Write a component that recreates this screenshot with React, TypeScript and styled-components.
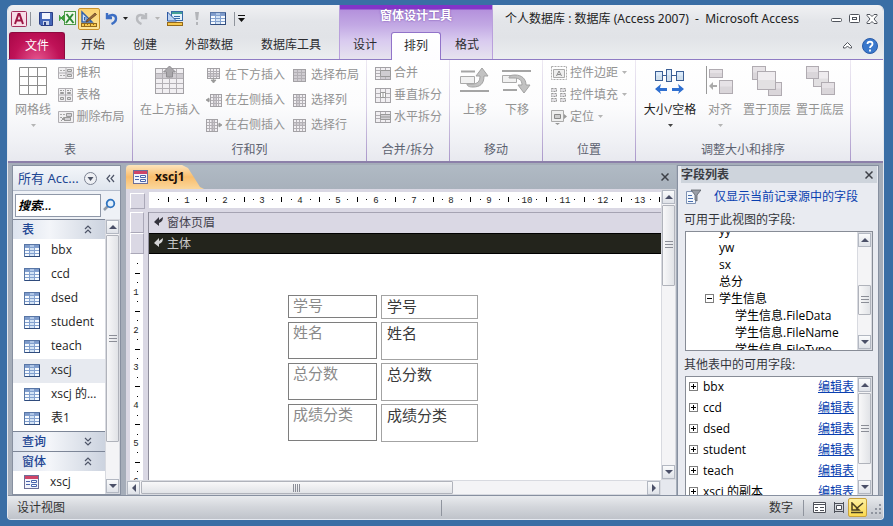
import React from 'react';
import styled, { createGlobalStyle, css } from 'styled-components';

const Global = createGlobalStyle`
  *, *::before, *::after { box-sizing: border-box; }
  html, body { margin: 0; background: #3a6ea5; }
  body, button, input, textarea {
    font-family: "Open Sans", "Noto Sans CJK SC", sans-serif;
    font-size: 12px;
    line-height: 16px;
  }
  button { border: 0; padding: 0; margin: 0; background: none; color: inherit; white-space: nowrap; }
  svg { display: block; flex: none; }
`;

/* ---------- window frame ---------- */

const Desktop = styled.div`
  height: 100vh;
  min-height: 420px;
  padding: 5px 9px 6px 7px;
  background: #3a6ea5;
  overflow: hidden;
`;
const Window = styled.div`
  height: 100%;
  display: flex;
  flex-direction: column;
  background: #a5adb9;
  border: 1px solid #e4e8ef;
  border-top: 0;
  border-radius: 6px 6px 4px 4px;
  overflow: hidden;
`;
const Header = styled.header`
  display: grid;
  grid-template-columns: auto auto 1fr;
  background: linear-gradient(#f0f1f3, #e3e5e9 30%, #e1e3e7 60%, #eceef0);
  border-bottom: 1px solid #8f7bc4;
  height: 55px;
`;
const HeaderPart = styled.div`
  display: grid;
  grid-template-rows: 27px 27px;
  min-width: 0;
`;
const QuickBar = styled.div`
  display: flex;
  align-items: center;
  padding-left: 2px;
`;
const QuickButton = styled.button<{ $w?: number; $on?: boolean }>`
  width: ${p => p.$w ?? 22}px;
  height: 22px;
  display: flex;
  align-items: center;
  justify-content: center;
  ${p => p.$on && css`
    border: 1px solid #c9922c;
    border-radius: 2px;
    background: linear-gradient(#fbd26f, #fde59a);
  `}
`;
const QuickRule = styled.span`
  width: 1px;
  height: 14px;
  background: #8f949c;
  margin: 0 3px;
`;
const TabRow = styled.nav`
  display: flex;
  align-items: stretch;
  color: #2c2c30;
`;
const Tab = styled.button<{ $active?: boolean }>`
  padding: 0 14px 1px;
  ${p => p.$active && css`
    background: linear-gradient(#fff, #fdfcff);
    border: 1px solid #9173c9;
    border-bottom: 0;
    border-radius: 3px 3px 0 0;
    margin-bottom: -1px;
  `}
`;
const ContextTabs = styled(TabRow)`
  gap: 1px;
  & ${Tab} { width: 50px; padding: 0 0 1px; }
`;
const FileTab = styled.button`
  width: 56px;
  margin: 0 2px 0 1px;
  color: #fff;
  border: 1px solid #8d0a3f;
  border-bottom: 0;
  border-radius: 3px 3px 0 0;
  background: radial-gradient(ellipse at 50% 110%, #e6578f, #bf1257 60%, #a90747);
`;
const Context = styled(HeaderPart)`
  margin-left: 4px;
  border: solid #b9a0dc;
  border-width: 0 1px;
  background: linear-gradient(#8334c8 0, #8334c8 4px, #b491dc 5px, #c2a8e4 20px, #d9cbef 36px, #e6e3ee 54px);
`;
const ContextTitle = styled.div`
  color: #fff;
  text-align: center;
  font-weight: 700;
  line-height: 21px;
  text-shadow: 0 0 2px #6b3fa5;
`;
const TitleLine = styled.div`
  display: flex;
  align-items: center;
  padding: 0 2px 0 12px;
  min-width: 0;
`;
const Title = styled.h1`
  flex: 1;
  margin: 0;
  font-family: "Noto Sans", "Noto Sans CJK SC", sans-serif;
  font-size: 12px;
  font-weight: 400;
  color: #222;
  white-space: pre;
  overflow: hidden;
`;
const WinButton = styled.button`
  width: 18px;
  display: flex;
  justify-content: center;
`;
const HelpLine = styled.div`
  display: flex;
  justify-content: flex-end;
  align-items: center;
  gap: 6px;
  padding-right: 5px;
`;

/* ---------- ribbon ---------- */

const Ribbon = styled.div`
  display: flex;
  height: 103px;
  flex: none;
  background: linear-gradient(#fff, #fcfcfd 45%, #f0f1f5 80%, #e8e9ef);
  border-bottom: 2px solid #8c80a9;
`;
const Group = styled.section<{ $w: number }>`
  flex: 0 0 ${p => p.$w}px;
  display: flex;
  flex-direction: column;
  border-right: 1px solid;
  border-image: linear-gradient(#eeeaf3, #d5cce4 50%, #a996ca) 1;
`;
const GroupBody = styled.div`
  flex: 1;
  display: flex;
  justify-content: center;
  padding-top: 2px;
`;
const GroupName = styled.h2`
  margin: 0;
  height: 20px;
  font-size: 12px;
  font-weight: 400;
  line-height: 18px;
  text-align: center;
  color: #5c6270;
`;
const BigButton = styled.button<{ $w: number; $live?: boolean }>`
  width: ${p => p.$w}px;
  height: 68px;
  display: flex;
  flex-direction: column;
  align-items: center;
  color: ${p => (p.$live ? '#1c1c1c' : '#939393')};
  padding-top: 4px;
`;
const BigLabel = styled.span`
  margin: 6px 0 6px;
`;
const SmallColumn = styled.div<{ $pitch: number; $w: number }>`
  width: ${p => p.$w}px;
  display: grid;
  grid-auto-rows: ${p => p.$pitch}px;
  align-content: start;
`;
const SmallButton = styled.button`
  display: flex;
  align-items: center;
  gap: 3px;
  color: #939393;
`;

/* ---------- work area ---------- */

const Work = styled.main`
  flex: 1;
  min-height: 0;
  display: flex;
  padding: 2px 4px 0;
`;
const Nav = styled.aside`
  width: 109px;
  flex: none;
  display: flex;
  flex-direction: column;
  border: 1px solid #8790a0;
  background: #fff;
  margin-right: 5px;
`;
const NavHead = styled.div`
  flex: none;
  height: 25px;
  display: flex;
  align-items: center;
  padding: 0 3px 0 5px;
  font-size: 13px;
  color: #1e4693;
  background: linear-gradient(#f3f6fa, #dfe5ee);
  border-bottom: 1px solid #b4bccb;
`;
const NavTitle = styled.span`
  flex: 1;
  font-family: "Noto Sans", "Noto Sans CJK SC", sans-serif;
  white-space: nowrap;
`;
const Search = styled.div`
  flex: none;
  height: 28px;
  display: flex;
  align-items: center;
  gap: 1px;
  padding: 2px 2px;
  background: #eef1f6;
`;
const SearchBox = styled.input`
  width: 86px;
  height: 23px;
  border: 1px solid #8f98a8;
  padding: 0 2px;
  color: #000;
  font-weight: 600;
  font-style: italic;
  background: #fff;
  &::placeholder { color: #000; opacity: 1; }
`;
const NavBody = styled.div`
  flex: 1;
  min-height: 0;
  display: flex;
`;
const NavList = styled.div`
  flex: 1;
  min-width: 0;
  overflow: hidden;
`;
const NavSection = styled.button`
  width: 100%;
  height: 20px;
  display: flex;
  align-items: center;
  justify-content: space-between;
  padding: 0 13px 0 9px;
  color: #1e4693;
  font-weight: 500;
  background: linear-gradient(90deg, #dce3ee, #f3f5f9 40%, #ccd3df);
  border-top: 1px solid #7d8697;
`;
const NavItem = styled.button<{ $on?: boolean }>`
  width: 100%;
  height: 24px;
  display: flex;
  align-items: center;
  gap: 11px;
  padding: 0 0 2px 11px;
  font-size: 12px;
  color: #262626;
  background: ${p => (p.$on ? '#e7eaf0' : 'transparent')};
`;

const Doc = styled.section`
  flex: 1;
  min-width: 0;
  display: flex;
  flex-direction: column;
  background: #fff;
`;
const DocTabs = styled.div`
  flex: none;
  height: 24px;
  display: flex;
  justify-content: space-between;
  align-items: stretch;
  padding-right: 7px;
  background: linear-gradient(#b0bac4, #a8b1bc);
`;
const DocTab = styled.button`
  width: 78px;
  display: flex;
  align-items: center;
  gap: 7px;
  padding-left: 7px;
  font-weight: 700;
  color: #1c1008;
  background: linear-gradient(#fde4bd, #f9bd6c 50%, #fbd79c);
  border-top-left-radius: 4px;
  clip-path: polygon(0 0, 56px 0, 62px 3px, 74px 22px, 78px 24px, 0 24px);
`;
const DocMain = styled.div`
  flex: 1;
  min-height: 0;
  display: flex;
`;
const Design = styled.div`
  flex: 1;
  min-width: 0;
  display: grid;
  grid-template-columns: 23px 1fr;
  grid-template-rows: 23px 1fr;
  background: #dad8e4;
`;
const Corner = styled.div`
  margin: 4px 4px 3px;
  border: 1px solid #aaa8b8;
  border-left-color: #fff;
  border-top-color: #fff;
`;
const HRule = styled.div`
  overflow: hidden;
  margin: 3px 0 4px;
  background: #fff;
`;
const VRule = styled.div`
  display: flex;
  flex-direction: column;
  border-right: 1px solid #8f8e9c;
  overflow: hidden;
`;
const VHandle = styled.div`
  flex: none;
  height: 21px;
  margin: 0 4px;
  border: 1px solid #aaa8b8;
  border-left-color: #fff;
  border-top-color: #fff;
`;
const VScale = styled.div`
  flex: 1;
  min-height: 0;
  margin: 0 5px 0 4px;
  background: #fff;
  overflow: hidden;
`;
const Canvas = styled.div`
  min-width: 0;
  background: #fff;
  overflow: hidden;
`;
const Section = styled.div<{ $dark?: boolean }>`
  height: 21px;
  display: flex;
  align-items: center;
  gap: 3px;
  padding-left: 4px;
  color: ${p => (p.$dark ? '#c9c9c9' : '#44424e')};
  background: ${p => (p.$dark ? '#23241c' : '#dad8e4')};
  border-top: 1px solid ${p => (p.$dark ? '#000' : '#a5a3b2')};
  border-bottom: ${p => (p.$dark ? '1px solid #000' : '0')};
  & svg { margin-bottom: 3px; }
`;
const Fields = styled.div`
  display: grid;
  grid-template-columns: 89px 97px;
  grid-template-rows: 24px 38px 38px 38px;
  gap: 3px 4px;
  margin: 41px 0 0 139px;
`;
const FieldLabel = styled.label`
  margin-bottom: 1px;
  padding: 0 4px;
  border: 1px solid #7e7e7e;
  font-size: 15px;
  line-height: 18px;
  color: #8a8a8a;
`;
const FieldBox = styled.textarea`
  margin: 0;
  padding: 1px 5px;
  border: 1px solid #a3a3a3;
  outline: 0;
  resize: none;
  overflow: hidden;
  font-size: 15px;
  line-height: 18px;
  color: #3a3a3a;
  background: #fff;
`;
const HBarRow = styled.div`
  display: flex;
  flex: none;
`;
const BarCorner = styled.div`
  width: 15px;
  background: #e6e8ee;
`;

/* ---------- scroll bars ---------- */

const Bar = styled.div<{ $h?: boolean }>`
  flex: ${p => (p.$h ? '1' : 'none')};
  display: flex;
  flex-direction: ${p => (p.$h ? 'row' : 'column')};
  ${p => (p.$h ? 'height: 15px;' : 'width: 15px;')}
  background: #f4f4f6;
  border: 1px solid #d8dae0;
`;
const BarButton = styled.button`
  flex: none;
  width: 13px;
  height: 14px;
  display: flex;
  align-items: center;
  justify-content: center;
  border: 1px solid #b3b8c2;
  background: linear-gradient(#fafbfc, #dfe2e8);
`;
const BarSpace = styled.div<{ $n: number }>`
  flex: ${p => p.$n} 1 0;
`;
const Thumb = styled.div<{ $n: number; $h?: boolean }>`
  flex: ${p => p.$n} 1 0;
  display: flex;
  align-items: center;
  justify-content: center;
  border: 1px solid #b0b3bb;
  border-radius: 1px;
  background: linear-gradient(${p => (p.$h ? '180deg' : '90deg')}, #f8f8f9, #e1e3e7);
`;

const arrows: Record<string, string> = {
  up: 'M0 6h8L4 2z', down: 'M0 2h8L4 6z', left: 'M6 0v8L2 4z', right: 'M2 0v8l4-4z',
};
const Arrow = ({ d }: { d: string }) => (
  <svg width="8" height="8" viewBox="0 0 8 8"><path d={arrows[d]} fill="#4b5068" /></svg>
);
function ScrollBar({ parts, horizontal }: { parts: [number, number, number]; horizontal?: boolean }) {
  return (
    <Bar $h={horizontal}>
      <BarButton aria-label={horizontal ? 'left' : 'up'}><Arrow d={horizontal ? 'left' : 'up'} /></BarButton>
      <BarSpace $n={parts[0]} />
      <Thumb $n={parts[1]} $h={horizontal}>
        <svg width="8" height="8" viewBox="0 0 8 8">
          <path d={horizontal ? 'M.5 0v8M2.5 0v8M4.5 0v8M6.5 0v8' : 'M0 .5h8M0 3.5h8M0 6.5h8'} stroke="#8b8e97" />
        </svg>
      </Thumb>
      <BarSpace $n={parts[2]} />
      <BarButton aria-label={horizontal ? 'right' : 'down'}><Arrow d={horizontal ? 'right' : 'down'} /></BarButton>
    </Bar>
  );
}

/* ---------- field list ---------- */

const Pane = styled.aside`
  width: 202px;
  flex: none;
  display: flex;
  flex-direction: column;
  margin-left: 1px;
  padding: 0 5px 0 3px;
  border: 1px solid #8790a0;
  border-bottom: 0;
  background: #e9ebf1;
`;
const PaneHead = styled.div`
  display: flex;
  align-items: center;
  justify-content: space-between;
  height: 17px;
  margin-right: -4px;
  padding: 0 4px 0 0;
  font-weight: 700;
  color: #3a3d44;
  background: #ced4dc;
`;
const PaneTool = styled.div`
  display: flex;
  align-items: center;
  gap: 13px;
  height: 27px;
  padding-left: 4px;
`;
const Link = styled.a`
  color: #0a3fb0;
  text-decoration: none;
`;
const EditLink = styled(Link)`
  margin-left: auto;
  text-decoration: underline;
`;
const PaneLabel = styled.div<{ $low?: boolean }>`
  padding-left: 3px;
  height: ${p => (p.$low ? 25 : 21)}px;
  line-height: ${p => (p.$low ? 28 : 20)}px;
  color: #33363c;
`;
const ListBox = styled.div<{ $fill?: boolean }>`
  display: flex;
  flex: ${p => (p.$fill ? '1 1 0' : '0 0 120px')};
  min-height: 0;
  margin-left: 4px;
  border: 1px solid #878c96;
  ${p => p.$fill && 'border-bottom: 0;'}
  background: #fff;
`;
const Rows = styled.ul<{ $cut?: boolean }>`
  flex: 1;
  min-width: 0;
  list-style: none;
  margin: 0;
  padding: 0;
  overflow: hidden;
  & > :first-child { margin-top: ${p => (p.$cut ? '-10px' : '-1px')}; }
`;
const Row = styled.li<{ $h: number; $in: number }>`
  height: ${p => p.$h}px;
  display: flex;
  align-items: center;
  gap: 5px;
  padding: 0 3px 0 ${p => p.$in}px;
  white-space: nowrap;
  color: #000;
`;

/* ---------- status bar ---------- */

const Status = styled.footer`
  flex: none;
  height: 24px;
  display: flex;
  align-items: center;
  padding: 0 1px 0 9px;
  color: #333;
  border-top: 1px solid #8790a0;
  background: linear-gradient(#e9ebee, #d4d7dc 45%, #bfc3ca);
`;
const StatusCell = styled.span<{ $share: number; $rule?: boolean }>`
  flex: ${p => p.$share} 1 0;
  border-right: ${p => (p.$rule ? '1px solid #8f949e' : '0')};
`;
const StatusMode = styled.span`
  padding-right: 10px;
  margin-right: 6px;
  border-right: 1px solid #8f949e;
`;
const ViewButton = styled.button<{ $on?: boolean }>`
  width: 19px;
  height: 19px;
  display: flex;
  align-items: center;
  justify-content: center;
  ${p => p.$on && 'border: 1px solid #c9a23c; border-radius: 2px; background: linear-gradient(#fdf0a0, #fbd94e);'}
`;

/* ---------- icons ---------- */

const Caret = ({ c = '#b5b5b5' }: { c?: string }) => (
  <svg width="7" height="4" viewBox="0 0 7 4"><path d="M1 0h5L3.5 3z" fill={c} /></svg>
);
const Chevrons = ({ down }: { down?: boolean }) => (
  <svg width="8" height="9" viewBox="0 0 8 9" fill="none" stroke="#4e5568" strokeWidth="1.2">
    <path d={down ? 'M1 1l3 3 3-3M1 5l3 3 3-3' : 'M1 4l3-3 3 3M1 8l3-3 3 3'} />
  </svg>
);
const TableIcon = () => (
  <svg width="16" height="13" viewBox="0 0 16 13">
    <rect x=".5" y=".5" width="15" height="12" fill="#f6fafe" stroke="#5876a6" />
    <path d="M1 1h14v2H1z" fill="#7e9bcb" />
    <path d="M6 1h4v11H6z" fill="#c5d9f1" opacity=".7" />
    <path d="M1 3.5h14M1 6.5h14M1 9.5h14M5.5 3v9M10.5 3v9" stroke="#83a1cf" />
    <path d="M15.5 1v12M1 12.5h15" stroke="#2f4b7c" />
  </svg>
);
const FormIcon = () => (
  <svg width="15" height="14" viewBox="0 0 15 14">
    <rect x=".5" y=".5" width="14" height="13" fill="#f2f4fb" stroke="#6d6f98" />
    <path d="M1 1h13v3H1z" fill="#cf4468" />
    <path d="M2 6.500h4M2 9.500h4" stroke="#4a64ac" />
    <path d="M7.500 5.500h5v2h-5zM7.500 9.500h5v2h-5z" fill="#fff" stroke="#4a64ac" />
  </svg>
);
const RulerPen = ({ s = 18 }: { s?: number }) => (
  <svg width={s} height={s} viewBox="0 0 18 18">
    <path d="M2 2v10h10z" fill="#cfe0f6" stroke="#3362ab" strokeWidth="1.500" />
    <path d="M4.500 7v3h3z" fill="#fff" stroke="#3362ab" />
    <path d="M7 10l8-7 1.500 1.500-8 6.500-2.500 1z" fill="#9a6a3a" stroke="#5a3a1c" strokeWidth=".7" />
    <rect x="1.500" y="13.500" width="15" height="3" fill="#f7c84c" stroke="#94691b" />
    <path d="M4.500 14v2M7.500 14v1M10.500 14v2M13.500 14v1" stroke="#94691b" />
  </svg>
);
/* gray lattice used by the row and column commands */
const Lattice = ({ x = 1, y = 2, w = 12, h = 12, c = 4, r = 4, band }: {
  x?: number; y?: number; w?: number; h?: number; c?: number; r?: number; band?: [number, number, number, number];
}) => {
  let d = '';
  for (let i = 1; i < c; i++) d += `M${x + Math.round((w * i) / c) + 0.5} ${y}v${h}`;
  for (let i = 1; i < r; i++) d += `M${x} ${y + Math.round((h * i) / r) + 0.5}h${w}`;
  return (
    <>
      <rect x={x + 0.5} y={y + 0.5} width={w} height={h} fill="#f1eff2" />
      {band && <rect x={band[0]} y={band[1]} width={band[2]} height={band[3]} fill="#cfccd1" />}
      <path d={d} stroke="#b3b0b5" />
      <rect x={x + 0.5} y={y + 0.5} width={w} height={h} fill="none" stroke="#a3a1a5" />
    </>
  );
};
const smallIcons: Record<string, React.ReactNode> = {
  stack: <><path d="M.5 2.500h15v11H.5zM8 3v11M1 8h14" fill="#f0eff1" stroke="#b0aeb2" /><path d="M2 5.500h5M2 10.500h5" stroke="#aaa" strokeDasharray="2 1" /><path d="M9.500 4.500h4v2h-4zM9.500 9.500h4v2h-4z" fill="#ddd" stroke="#999" /></>,
  tabular: <><path d="M.5 1.500h14v13H.5zM7.500 2v12M1 8h14" fill="#f0eff1" stroke="#b0aeb2" /><path d="M2 3.500h4M9 3.500h4" stroke="#999" strokeDasharray="2 1" /><path d="M2.500 5.500h3v1h-3zM9.500 5.500h3v1h-3zM2.500 10.500h3v2h-3zM9.500 10.500h3v2h-3z" fill="#ddd" stroke="#999" /></>,
  remove: <><path d="M.5 2.500h15v11H.5z" fill="#f0eff1" stroke="#b0aeb2" /><path d="M2 5.500h5M2 8.500h4" stroke="#aaa" strokeDasharray="2 1" /><path d="M8.500 4.500h5v3h-5zM6.500 8.500h6v3h-6z" fill="#d2d0d4" stroke="#999" /><path d="M3 12l4-4M3 8l4 4" stroke="#999" /></>,
  below: <><Lattice y={1} h={10} band={[1, 6, 12, 4]} /><path d="M7.500 11v3M5 13h5l-2.500 3z" stroke="#999" fill="#999" strokeWidth=".8" /></>,
  left: <><Lattice x={4} w={11} band={[8, 2, 3, 12]} /><path d="M4 8H1M3 6L0 8l3 2z" stroke="#999" fill="#999" strokeWidth=".8" /></>,
  right: <><Lattice x={0} w={11} band={[5, 2, 3, 12]} /><path d="M11 8h3M13 6l3 2-3 2z" stroke="#999" fill="#999" strokeWidth=".8" /></>,
  all: <Lattice band={[1, 2, 12, 12]} r={4} c={3} />,
  col: <Lattice band={[4, 2, 4, 12]} />,
  row: <Lattice band={[1, 5, 12, 4]} />,
  merge: <><Lattice x={0} w={15} c={3} band={[5, 5, 10, 9]} /><path d="M5.500 5.500h10v6h-10z" fill="#cfcdd1" stroke="#999" /></>,
  splitV: <><Lattice x={0} y={1} w={15} h={14} c={3} r={3} /><path d="M5.500 5.500h5v5h-5zM8 5v6" fill="#fff" stroke="#999" /></>,
  splitH: <><Lattice x={0} w={15} h={11} c={3} r={3} /><path d="M5.500 5.500h10v5h-10zM5 8h10" fill="#d2d0d4" stroke="#999" /></>,
  margin: <><path d="M.5 1.500h15v13H.5z" fill="none" stroke="#aaa" strokeDasharray="2 1" /><path d="M2.500 4.500h11v8h-11z" fill="#eee" stroke="#aaa" /><path d="M5.500 11L8 6l2.500 5M6.500 9.500h3" fill="none" stroke="#888" /></>,
  padding: <path d="M.5 1.500h5v3h-5zM9.500 1.500h5v3h-5zM.5 6.500h5v3h-5zM9.500 6.500h5v3h-5zM.5 11.500h5v3h-5zM9.500 11.500h5v3h-5z" fill="#e2e0e4" stroke="#999" strokeDasharray="2 1" />,
  anchor: <><path d="M.5 1.500h12v11H.5z" fill="#eee" stroke="#aaa" /><path d="M3.500 5.500h6v4h-6z" fill="#ccc" stroke="#888" /><path d="M13 5l3 2.500-3 2.500zM4 14h5l-2.500 2z" fill="#999" /></>,
};
const SmallIcon = ({ n }: { n: string }) => <svg width="16" height="16" viewBox="0 0 16 16">{smallIcons[n]}</svg>;

const box = (x: number, y: number, w: number, h: number, fill = '#e6e2e6', stroke = '#b0abb1') => (
  <g><rect x={x + 0.5} y={y + 0.5} width={w} height={h} fill={fill} stroke={stroke} /><path d={`M${x + 1} ${y + h / 2}h${w - 1}v${h / 2}h${-(w - 1)}z`} fill="#000" opacity=".05" /></g>
);
const bigIcons: Record<string, React.ReactNode> = {
  grid: <path d="M1.500 1.500h27v27h-27zM10.500 1v28M19.500 1v28M1 10.500h28M1 19.500h28" fill="#fff" stroke="#8c8c8c" />,
  above: <><Lattice x={0} y={2} w={28} h={25} c={4} r={5} band={[0, 7, 28, 6]} /><path d="M14.500 0l6 6h-3v5h-6V6h-3z" fill="#a9a7ab" stroke="#8f8d91" /></>,
  moveUp: <><path d="M1 5.500h14M0 25h29" stroke="#a5a5a5" strokeWidth="2" /><path d="M.5 10.500h14v7H.5z" fill="#f1f1f1" stroke="#aaa" /><path d="M7 18h5c6 0 8-3 8-8h-4l6-8 6 8h-4c0 8-4 11-11 11-4 0-6-1-6-3z" fill="#c2c2c2" stroke="#a2a2a2" /></>,
  moveDown: <><path d="M0 5h29M1 24h14" stroke="#a5a5a5" strokeWidth="2" /><path d="M.5 9.500h14v7H.5z" fill="#f1f1f1" stroke="#aaa" /><path d="M7 12c0-2 2-3 6-3 7 0 11 4 11 10h4l-6 8-6-8h4c0-5-3-7-8-7z" fill="#c2c2c2" stroke="#a2a2a2" /></>,
  size: <><path d="M6 9.500h17" stroke="#3c5f95" />{box(0, 5, 7, 9, '#dcebfa', '#3c5f95')}{box(11, 3, 5, 12, '#dcebfa', '#3c5f95')}{box(21, 5, 7, 9, '#dcebfa', '#3c5f95')}<path d="M0 23l6-5-1 4h7v3H5l1 3zM29 23l-6-5 1 4h-7v3h7l-1 3z" fill="#2f6fd0" /></>,
  align: <><path d="M1.500 0v28" stroke="#999" />{box(4, 3, 13, 8)}{box(14, 14, 13, 13)}<path d="M4 20l4-4v3h4v2H8v3z" fill="#aaa" /></>,
  front: <>{box(0, 0, 13, 13)}{box(16, 16, 13, 13)}{box(5, 5, 18, 18, '#efecef')}</>,
  back: <>{box(8, 5, 15, 15, '#efecef')}{box(1, 0, 12, 12)}{box(16, 16, 13, 12)}</>,
};
const BigIcon = ({ n }: { n: string }) => <svg width="30" height="30" viewBox="0 0 30 30">{bigIcons[n]}</svg>;

const SectionMark = ({ c }: { c: string }) => (
  <svg width="11" height="11" viewBox="0 0 11 11"><path d="M1 6l5-5v3l4-3c0 3-1 5-4 6v3z" fill={c} /></svg>
);
const Plus = ({ minus }: { minus?: boolean }) => (
  <svg width="9" height="9" viewBox="0 0 9 9">
    <rect x=".5" y=".5" width="8" height="8" fill="#fff" stroke="#7f7f7f" />
    <path d={minus ? 'M2 4.500h5' : 'M2 4.500h5M4.500 2v5'} stroke="#000" />
  </svg>
);
const Cross = () => (
  <svg width="8" height="8" viewBox="0 0 8 8"><path d="M.5.5l7 7M7.500.5l-7 7" stroke="#3e4148" strokeWidth="1.500" /></svg>
);

/* ---------- rulers ---------- */

const UNIT = 37.8;
function Scale({ vertical, count }: { vertical?: boolean; count: number }) {
  const marks: React.ReactNode[] = [];
  for (let i = 1; i <= count * 4; i++) {
    const at = Math.round((i * UNIT) / 4);
    if (i % 4 === 0) {
      marks.push(
        <text key={i} x={vertical ? 6 : at} y={vertical ? at + 3 : 11} textAnchor="middle"
          fontFamily="Liberation Mono, monospace" fontSize="9" fill="#222">{i / 4}</text>,
      );
    } else {
      const long = i % 2 === 0 ? 5 : 1;
      marks.push(
        <rect key={i} x={vertical ? 8 - (long + 1) / 2 : at} y={vertical ? at : 8 - (long + 1) / 2}
          width={vertical ? long : 1} height={vertical ? 1 : long} fill="#000" />,
      );
    }
  }
  return vertical
    ? <svg width="14" height={count * 38}>{marks}</svg>
    : <svg width={count * 38} height="16">{marks}</svg>;
}

/* ---------- ribbon parts ---------- */

const Small = ({ n, t, caret }: { n: string; t: string; caret?: boolean }) => (
  <SmallButton><SmallIcon n={n} />{t}{caret && <Caret />}</SmallButton>
);
const Big = ({ n, t, w, caret, live }: { n: string; t: string; w: number; caret?: boolean; live?: boolean }) => (
  <BigButton $w={w} $live={live}>
    <BigIcon n={n} /><BigLabel>{t}</BigLabel>{caret && <Caret c={live ? '#444' : undefined} />}
  </BigButton>
);

const tables = ['bbx', 'ccd', 'dsed', 'student', 'teach', 'xscj', 'xscj 的...', '表1'];
const formFields = ['学号', '姓名', '总分数', '成绩分类'];
const otherTables = ['bbx', 'ccd', 'dsed', 'student', 'teach', 'xscj 的副本'];

export default function App() {
  return (
    <>
      <Global />
      <Desktop>
        <Window>
          <Header>
            <HeaderPart>
              <QuickBar>
                <QuickButton $w={17} aria-label="Access">
                  <svg width="16" height="16" viewBox="0 0 16 16">
                    <rect x=".5" y=".5" width="15" height="15" rx="1" fill="#f7dce6" stroke="#a3305c" />
                    <path d="M4 13L7.500 3h1L12 13M5.500 9.500h5" fill="none" stroke="#9c1543" strokeWidth="2" />
                  </svg>
                </QuickButton>
                <QuickRule />
                <QuickButton $w={23} aria-label="保存">
                  <svg width="14" height="14" viewBox="0 0 14 14">
                    <path d="M.5.5h13v13H2l-1.500-1.500z" fill="#4667b8" stroke="#2b3f86" />
                    <path d="M3 1h8v6H3z" fill="#f2f5fc" /><path d="M4 9h6v4H4z" fill="#c9d3ea" /><path d="M5 10h2v3H5z" fill="#2b3f86" />
                  </svg>
                </QuickButton>
                <QuickButton $w={21} aria-label="Excel">
                  <svg width="17" height="15" viewBox="0 0 17 15">
                    <rect x="5.500" y=".5" width="11" height="13" fill="#eef7ea" stroke="#4e9a4a" />
                    <path d="M7.500 3l7 9M14 3l-7 9" stroke="#2e8a35" strokeWidth="2" />
                    <path d="M0 4l2 3-2 3M5 4L2 7l3 3z" fill="#3f9e3f" stroke="#3f9e3f" />
                  </svg>
                </QuickButton>
                <QuickButton $w={22} $on aria-label="设计视图"><RulerPen /></QuickButton>
                <QuickButton $w={22} aria-label="撤消">
                  <svg width="13" height="13" viewBox="0 0 13 13"><path d="M2 1v5h5M2.500 5.500C5 2 11 2 11 6.500 11 9 9 11 6.500 12" fill="none" stroke="#3d6fc4" strokeWidth="2.400" /></svg>
                </QuickButton>
                <Caret c="#222" />
                <QuickButton $w={25} aria-label="恢复">
                  <svg width="13" height="13" viewBox="0 0 13 13"><path d="M11 1v5H6M10.500 5.500C8 2 2 2 2 6.500 2 9 4 11 6.500 12" fill="none" stroke="#b9bbbf" strokeWidth="2.400" /></svg>
                </QuickButton>
                <Caret />
                <QuickButton $w={28} aria-label="窗体设计">
                  <svg width="16" height="16" viewBox="0 0 16 16">
                    <rect x="4.500" y=".5" width="11" height="9" fill="#e4f1fa" stroke="#356aa8" /><path d="M5 1h10v2H5z" fill="#45a095" />
                    <path d="M7 5.500h6M7 7.500h6" stroke="#356aa8" /><path d="M.5 1v9h9z" fill="#bcd2f1" stroke="#2d59a3" />
                    <rect x=".5" y="11.500" width="15" height="3" fill="#f7c84c" stroke="#94691b" />
                  </svg>
                </QuickButton>
                <QuickButton $w={16} aria-label="运行">
                  <svg width="6" height="13" viewBox="0 0 6 13"><path d="M1 0h4L4 8H2zM2 10h2v3H2z" fill="#b3b5b9" /></svg>
                </QuickButton>
                <QuickButton $w={26} aria-label="数据表"><TableIcon /></QuickButton>
                <QuickRule />
                <svg width="7" height="7" viewBox="0 0 7 7"><path d="M0 .5h7" stroke="#111" /><path d="M0 3h7L3.500 7z" fill="#111" /></svg>
              </QuickBar>
              <TabRow>
                <FileTab>文件</FileTab>
                <Tab>开始</Tab><Tab>创建</Tab><Tab>外部数据</Tab><Tab>数据库工具</Tab>
              </TabRow>
            </HeaderPart>
            <Context>
              <ContextTitle>窗体设计工具</ContextTitle>
              <ContextTabs><Tab>设计</Tab><Tab $active>排列</Tab><Tab>格式</Tab></ContextTabs>
            </Context>
            <HeaderPart>
              <TitleLine>
                <Title>个人数据库 : 数据库 (Access 2007)  -  Microsoft Access</Title>
                <WinButton aria-label="最小化"><svg width="11" height="9" viewBox="0 0 11 9"><rect x=".5" y="4.500" width="10" height="3" rx="1" fill="#fff" stroke="#50545c" /></svg></WinButton>
                <WinButton aria-label="还原"><svg width="11" height="9" viewBox="0 0 11 9"><rect x=".5" y=".5" width="10" height="8" rx="1" fill="#fff" stroke="#50545c" /><rect x="3.500" y="3.500" width="4" height="2" fill="#fff" stroke="#50545c" /></svg></WinButton>
                <WinButton aria-label="关闭"><svg width="12" height="10" viewBox="0 0 12 10"><path d="M1 .5h3l2 2 2-2h3v1L8 5l3 3.500v1H8l-2-2-2 2H1v-1L4 5 1 1.500z" fill="#fff" stroke="#50545c" /></svg></WinButton>
              </TitleLine>
              <HelpLine>
                <WinButton aria-label="折叠"><svg width="9" height="8" viewBox="0 0 9 8"><path d="M.5 4.500l4-4 4 4v1.500h-2l-2-2-2 2h-2z" fill="#fff" stroke="#50545c" /></svg></WinButton>
                <button aria-label="帮助">
                  <svg width="16" height="16" viewBox="0 0 16 16">
                    <circle cx="8" cy="8" r="7.500" fill="#3a78cc" stroke="#2a5ca8" /><path d="M5.500 6c0-3 5-3 5 0 0 2-2.500 2-2.500 4M8 11.500v2" fill="none" stroke="#fff" strokeWidth="1.800" />
                  </svg>
                </button>
              </HelpLine>
            </HeaderPart>
          </Header>

          <Ribbon>
            <Group $w={125}>
              <GroupBody>
                <Big n="grid" t="网格线" w={49} caret />
                <SmallColumn $pitch={22} $w={74}><Small n="stack" t="堆积" /><Small n="tabular" t="表格" /><Small n="remove" t="删除布局" /></SmallColumn>
              </GroupBody>
              <GroupName>表</GroupName>
            </Group>
            <Group $w={234}>
              <GroupBody>
                <Big n="above" t="在上方插入" w={72} />
                <SmallColumn $pitch={25} $w={86}><Small n="below" t="在下方插入" /><Small n="left" t="在左侧插入" /><Small n="right" t="在右侧插入" /></SmallColumn>
                <SmallColumn $pitch={25} $w={73}><Small n="all" t="选择布局" /><Small n="col" t="选择列" /><Small n="row" t="选择行" /></SmallColumn>
              </GroupBody>
              <GroupName>行和列</GroupName>
            </Group>
            <Group $w={83}>
              <GroupBody>
                <SmallColumn $pitch={22} $w={66}><Small n="merge" t="合并" /><Small n="splitV" t="垂直拆分" /><Small n="splitH" t="水平拆分" /></SmallColumn>
              </GroupBody>
              <GroupName>合并/拆分</GroupName>
            </Group>
            <Group $w={93}>
              <GroupBody><Big n="moveUp" t="上移" w={42} /><Big n="moveDown" t="下移" w={42} /></GroupBody>
              <GroupName>移动</GroupName>
            </Group>
            <Group $w={93}>
              <GroupBody>
                <SmallColumn $pitch={22} $w={76}><Small n="margin" t="控件边距" caret /><Small n="padding" t="控件填充" caret /><Small n="anchor" t="定位" caret /></SmallColumn>
              </GroupBody>
              <GroupName>位置</GroupName>
            </Group>
            <Group $w={215}>
              <GroupBody>
                <Big n="size" t="大小/空格" w={60} caret live />
                <Big n="align" t="对齐" w={40} caret />
                <Big n="front" t="置于顶层" w={54} />
                <Big n="back" t="置于底层" w={52} />
              </GroupBody>
              <GroupName>调整大小和排序</GroupName>
            </Group>
          </Ribbon>

          <Work>
            <Nav>
              <NavHead>
                <NavTitle>所有 Acc...</NavTitle>
                <svg width="13" height="13" viewBox="0 0 13 13"><circle cx="6.500" cy="6.500" r="6" fill="#eef0f4" stroke="#7b8292" /><path d="M3.500 5h6l-3 4z" fill="#4e5568" /></svg>
                <svg width="20" height="9" viewBox="-1 0 20 9" fill="none" stroke="#4e5568" strokeWidth="1.200"><path d="M12 1L9 4.500 12 8M16 1l-3 3.500L16 8" /></svg>
              </NavHead>
              <Search>
                <SearchBox aria-label="搜索" placeholder="搜索..." />
                <svg width="14" height="14" viewBox="0 0 14 14"><path d="M6 8l-4 4" stroke="#8f9aa8" strokeWidth="2.500" /><circle cx="8.500" cy="5.500" r="3.800" fill="#e3f0fc" stroke="#2f74c0" strokeWidth="1.800" /></svg>
              </Search>
              <NavBody>
                <NavList>
                  <NavSection>表<Chevrons /></NavSection>
                  {tables.map(t => <NavItem key={t} $on={t === 'xscj'}><TableIcon />{t}</NavItem>)}
                  <NavSection>查询<Chevrons down /></NavSection>
                  <NavSection>窗体<Chevrons /></NavSection>
                  <NavItem><FormIcon />xscj</NavItem>
                </NavList>
                <ScrollBar parts={[1, 205, 37]} />
              </NavBody>
            </Nav>

            <Doc>
              <DocTabs>
                <DocTab><FormIcon />xscj1</DocTab>
                <button aria-label="关闭 xscj1"><Cross /></button>
              </DocTabs>
              <DocMain>
                <Design>
                  <Corner />
                  <HRule><Scale count={14} /></HRule>
                  <VRule><VHandle /><VHandle /><VScale><Scale vertical count={6} /></VScale></VRule>
                  <Canvas>
                    <Section><SectionMark c="#33323c" />窗体页眉</Section>
                    <Section $dark><SectionMark c="#d5d5d5" />主体</Section>
                    <Fields>
                      {formFields.map(f => (
                        <React.Fragment key={f}>
                          <FieldLabel htmlFor={f}>{f}</FieldLabel>
                          <FieldBox id={f} readOnly value={f} rows={1} />
                        </React.Fragment>
                      ))}
                    </Fields>
                  </Canvas>
                </Design>
                <ScrollBar parts={[1, 79, 180]} />
              </DocMain>
              <HBarRow><ScrollBar horizontal parts={[1, 310, 194]} /><BarCorner /></HBarRow>
            </Doc>

            <Pane>
              <PaneHead>字段列表<button aria-label="关闭字段列表"><Cross /></button></PaneHead>
              <PaneTool>
                <svg width="16" height="16" viewBox="0 0 16 16">
                  <path d="M1.500 2.500h9v12h-9z" fill="#f4f8fd" stroke="#7f93b4" /><path d="M3 6.500h4M3 9.500h5M3 12.500h5" stroke="#4a6fae" />
                  <path d="M6 1h10l-4 5v6l-2-1V6z" fill="#9a9ea6" stroke="#5b5f68" strokeWidth=".8" />
                </svg>
                <Link href="#fields">仅显示当前记录源中的字段</Link>
              </PaneTool>
              <PaneLabel>可用于此视图的字段:</PaneLabel>
              <ListBox>
                <Rows $cut>
                  {['yy', 'yw', 'sx', '总分'].map(t => <Row key={t} $h={17} $in={33}>{t}</Row>)}
                  <Row $h={17} $in={19}><Plus minus />学生信息</Row>
                  {['FileData', 'FileName', 'FileType'].map(t => <Row key={t} $h={17} $in={49}>学生信息.{t}</Row>)}
                </Rows>
                <ScrollBar parts={[38, 29, 20]} />
              </ListBox>
              <PaneLabel $low>其他表中的可用字段:</PaneLabel>
              <ListBox $fill>
                <Rows>
                  {otherTables.map(t => (
                    <Row key={t} $h={21} $in={3}><Plus />{t}<EditLink href={`#${t}`}>编辑表</EditLink></Row>
                  ))}
                </Rows>
                <ScrollBar parts={[1, 69, 16]} />
              </ListBox>
            </Pane>
          </Work>

          <Status>
            <StatusCell $share={13} $rule>设计视图</StatusCell>
            <StatusCell $share={10} />
            <StatusMode>数字</StatusMode>
            <ViewButton aria-label="窗体视图"><svg width="13" height="11" viewBox="0 0 13 11"><path d="M.5.5h12v10H.5zM1 2.500h11M2 5.500h3M2 8.500h3M7 5.500h4M7 8.500h4" fill="#fff" stroke="#4d5058" /></svg></ViewButton>
            <ViewButton aria-label="布局视图"><svg width="10" height="11" viewBox="0 0 10 11"><path d="M.5 0v11M9.500 0v11M0 1.500h10M0 9.500h10M2.500 3.500h5v4h-5z" fill="#fff" stroke="#4d5058" /></svg></ViewButton>
            <ViewButton $on aria-label="设计视图"><svg width="13" height="12" viewBox="0 0 13 12"><path d="M1 1v7h7zM0 10.500h12M5 7l7-6" fill="none" stroke="#4a4020" strokeWidth="1.500" /></svg></ViewButton>
            <svg width="15" height="16" viewBox="-3 0 15 16"><path d="M9 4h2v2H9zM9 8h2v2H9zM5 8h2v2H5zM9 12h2v2H9zM5 12h2v2H5zM1 12h2v2H1z" fill="#8f949e" /></svg>
          </Status>
        </Window>
      </Desktop>
    </>
  );
}
